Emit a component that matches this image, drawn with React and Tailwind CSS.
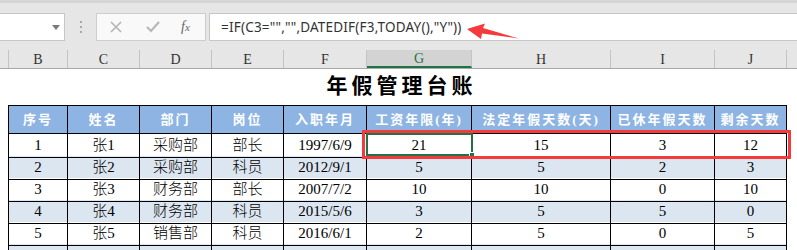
import React from "react";

const COLS = [59, 72, 72, 72, 83, 105, 139, 104, 72];
const LETTERS = ["B", "C", "D", "E", "F", "G", "H", "I", "J"];
const HEADERS = ["序号", "姓名", "部门", "岗位", "入职年月", "工资年限(年)", "法定年假天数(天)", "已休年假天数", "剩余天数"];
const ROWS = [
  ["1", "张1", "采购部", "部长", "1997/6/9", "21", "15", "3", "12"],
  ["2", "张2", "采购部", "科员", "2012/9/1", "5", "5", "2", "3"],
  ["3", "张3", "财务部", "部长", "2007/7/2", "10", "10", "0", "10"],
  ["4", "张4", "财务部", "科员", "2015/5/6", "3", "5", "5", "0"],
  ["5", "张5", "销售部", "科员", "2016/6/1", "2", "5", "0", "5"],
  ["", "", "", "", "", "", "", "", ""],
];

const gridCols = "grid grid-cols-[59px_72px_72px_72px_83px_105px_139px_104px_72px]";
const serif = { fontFamily: '"Liberation Serif", "Noto Sans CJK SC", serif' };
const cjk = { fontFamily: '"Liberation Serif", "Noto Sans CJK SC", serif' };

export default function App() {
  return (
    <div className="relative w-[797px] h-[250px] overflow-hidden bg-white">
      {/* formula bar */}
      <div className="h-[50px] bg-[#e6e6e6] border-t-[3px] border-[#d6d6d6] flex items-start pt-[10px]">
        <div className="relative w-[65px] h-[28px] bg-white border border-l-0 border-[#c6c6c6]">
          <div className="absolute left-[52px] top-[11px] w-0 h-0 border-l-[4px] border-r-[4px] border-t-[5px] border-l-transparent border-r-transparent border-t-[#7a7a7a]" />
        </div>
        <div className="w-[31px] h-[28px] flex flex-col items-center justify-center gap-[3px]">
          <div className="w-[2px] h-[2px] bg-[#a8a8a8]" />
          <div className="w-[2px] h-[2px] bg-[#a8a8a8]" />
          <div className="w-[2px] h-[2px] bg-[#a8a8a8]" />
        </div>
        <div className="w-[110px] h-[28px] bg-[#f9f9f9] border border-[#cdcdcd] flex items-center">
          <svg width="12" height="12" viewBox="0 0 12 12" className="ml-[13px]">
            <path d="M1 1 L11 11 M11 1 L1 11" stroke="#b3b3b3" strokeWidth="1.6" />
          </svg>
          <svg width="14" height="12" viewBox="0 0 14 12" className="ml-[24px]">
            <path d="M1 6 L5 10 L13 1" stroke="#b8b8b8" strokeWidth="2.2" fill="none" />
          </svg>
          <span className="ml-[21px] text-[14px] italic text-[#666] leading-none" style={{ fontFamily: '"Liberation Serif", serif' }}>
            f<span className="text-[11px]">x</span>
          </span>
        </div>
        <div className="ml-[3px] flex-1 h-[28px] bg-white border border-r-0 border-[#c6c6c6] flex items-center pl-[11px]">
          <span className="text-[13.5px] text-[#333] tracking-[0.2px]" style={{ fontFamily: '"Noto Sans", "Liberation Sans", sans-serif' }}>
            =IF(C3="","",DATEDIF(F3,TODAY(),"Y"))
          </span>
        </div>
      </div>

      {/* column header letters */}
      <div className="flex h-[19px] bg-[#e6e6e6] border-b border-[#a8a8a8]">
        <div className="w-[9px] border-r border-[#c4c4c4]" />
        {LETTERS.map((l, i) => (
          <div
            key={l}
            style={{ width: COLS[i], ...serif }}
            className={
              l === "G"
                ? "flex items-center justify-center text-[14px] text-[#217346] bg-[#d3d3d3] border-r border-[#c4c4c4] border-b-2 border-b-[#217346]"
                : "flex items-center justify-center text-[14px] text-[#333] border-r border-[#c4c4c4]"
            }
          >
            {l}
          </div>
        ))}
        <div className="flex-1" />
      </div>

      {/* title */}
      <div className="h-[36px] flex items-center justify-center pl-[12px] pr-[6px]">
        <span className="text-[21px] font-bold tracking-[4px] text-black" style={cjk}>
          年假管理台账
        </span>
      </div>

      {/* table */}
      <div className="ml-[8px] w-[779px] border-l border-t border-black">
        <div className={gridCols + " h-[28px] bg-[#8db4e2]"}>
          {HEADERS.map((h) => (
            <div key={h} className="border-r border-b border-black flex items-center justify-center text-white font-bold text-[13px] tracking-[2px]" style={cjk}>
              {h}
            </div>
          ))}
        </div>
        {ROWS.map((r, ri) => (
          <div key={ri} className={gridCols + " h-[22px] " + (ri % 2 === 1 ? "bg-[#dce6f1]" : "bg-white")}>
            {r.map((c, ci) => (
              <div key={ci} className="border-r border-b border-black flex items-center justify-center text-[15px] font-light text-black" style={cjk}>
                {c}
              </div>
            ))}
          </div>
        ))}
      </div>

      {/* selection */}
      <div className="absolute left-[366px] top-[133px] w-[107px] h-[23px] border-2 border-[#217346]" />
      <div className="absolute left-[469px] top-[152px] w-[6px] h-[6px] bg-[#217346] border border-white" />

      {/* red annotation box */}
      <div className="absolute left-[362px] top-[130px] w-[429px] h-[29px] border-[3px] border-[#f43a3c]" />

      {/* red arrow */}
      <svg className="absolute left-0 top-0" width="797" height="50" viewBox="0 0 797 50">
        <polygon points="467,29 485,23.5 483,28 519,38.5 482,33.5 481,39" fill="#f43a3c" />
      </svg>
    </div>
  );
}
